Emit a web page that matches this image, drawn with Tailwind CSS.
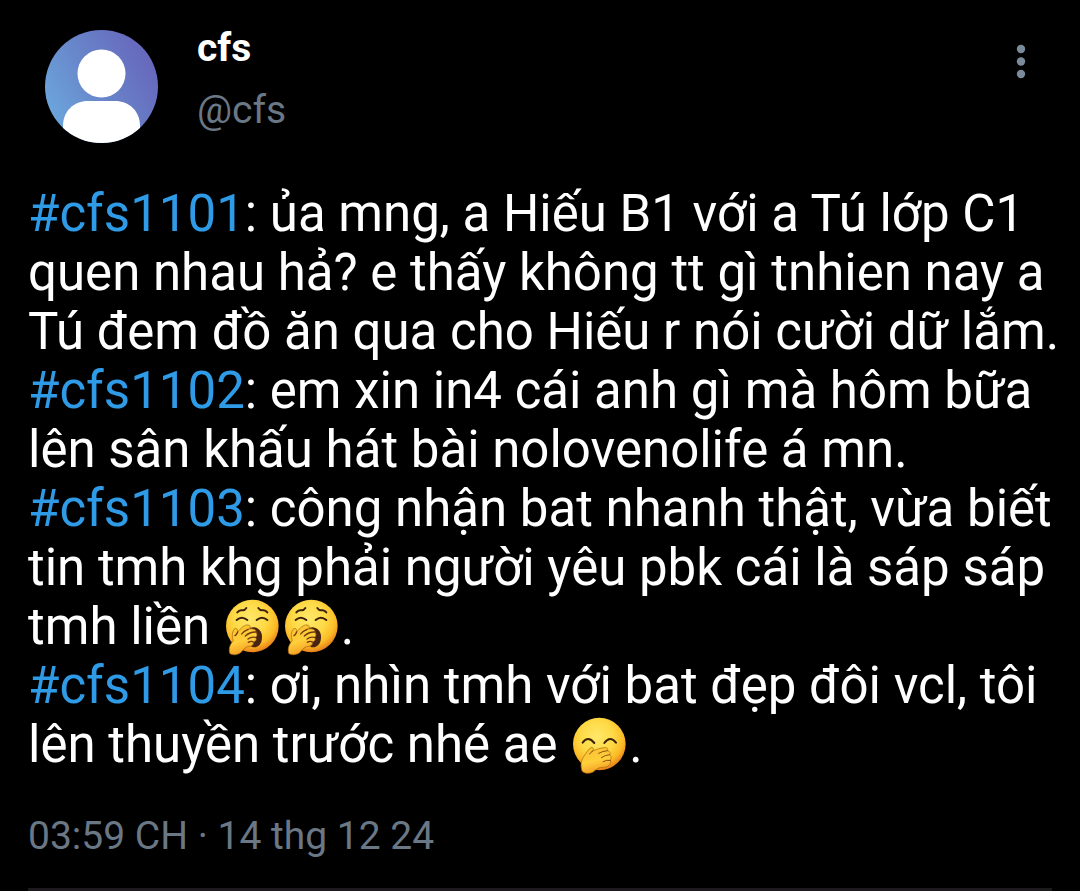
<!DOCTYPE html>
<html lang="vi">
<head>
    <meta charset="UTF-8">
    <meta name="viewport" content="width=device-width, initial-scale=1.0">
    <title>cfs</title>
    <script src="https://cdn.jsdelivr.net/npm/@tailwindcss/browser@4"></script>
</head>
<body class="bg-black text-white font-[Roboto,'Noto_Sans',sans-serif]">
    <!-- Emoji symbols -->
    <svg class="absolute size-0" aria-hidden="true">
        <defs>
            <radialGradient id="face" cx="45%" cy="36%" r="64%">
                <stop offset="0" stop-color="#ffe86a"/>
                <stop offset="0.5" stop-color="#fed945"/>
                <stop offset="0.8" stop-color="#fbbb26"/>
                <stop offset="1" stop-color="#e8801c"/>
            </radialGradient>
            <linearGradient id="hand" x1="0" y1="0" x2="0.3" y2="1">
                <stop offset="0" stop-color="#fbbd2c"/>
                <stop offset="0.6" stop-color="#ffcf3c"/>
                <stop offset="1" stop-color="#f5a024"/>
            </linearGradient>
            <symbol id="yawn" viewBox="0 0 177 177">
                <circle cx="88" cy="87" r="79" fill="url(#face)"/>
                <g fill="none" stroke="#3c220c" stroke-width="6" stroke-linecap="round">
                    <path d="M43 46Q49 38 57 40Q65 41 70 33"/>
                    <path d="M106 33Q111 41 119 40Q127 38 133 46"/>
                    <path d="M41 69Q56 55 73 69"/>
                    <path d="M101 69Q117 55 133 69"/>
                </g>
                <path d="M82 92C99 86 116 98 117 117C118 138 108 151 92 151C72 149 66 108 82 92Z" fill="#4a2413"/>
                <path d="M20 169C16 152 22 141 31 131C26 120 27 105 33 97C38 91 46 96 44 105C53 94 65 82 75 84C85 85 83 93 75 97C89 93 101 98 99 105C102 111 104 118 97 121C102 126 100 133 91 135C93 142 88 148 79 148C68 149 64 155 53 167C42 174 28 176 20 169Z" fill="url(#hand)" stroke="#a4650f" stroke-width="2"/>
                <path d="M44 105Q41 113 36 116M75 97Q61 103 56 111M99 105Q81 104 67 117M97 121Q85 118 75 126M91 135Q84 131 76 136" fill="none" stroke="#6b3a0e" stroke-width="4" stroke-linecap="round"/>
            </symbol>
            <symbol id="giggle" viewBox="0 0 177 177">
                <circle cx="88" cy="87" r="79" fill="url(#face)"/>
                <g fill="none" stroke="#3c220c" stroke-width="6" stroke-linecap="round">
                    <path d="M38 83Q54 61 73 84"/>
                    <path d="M103 84Q120 61 138 83"/>
                </g>
                <path d="M36 168C30 148 34 135 43 122C50 112 55 102 63 98C71 96 72 102 68 108C78 103 95 98 104 98C113 97 115 103 112 107C120 108 122 115 119 119C126 124 123 132 121 136C126 148 112 157 100 157C88 156 80 162 68 172C56 177 43 176 36 168Z" fill="url(#hand)" stroke="#a4650f" stroke-width="2"/>
                <path d="M68 108Q62 111 59 117M112 107Q98 108 86 115M119 119Q105 120 94 128M121 136Q109 134 99 140" fill="none" stroke="#8a5212" stroke-width="3" stroke-linecap="round"/>
            </symbol>
        </defs>
    </svg>

    <article class="px-7">
        <!-- Author -->
        <header class="flex items-start pt-[30px] pl-[17px] pr-[26px]">
            <svg class="size-[113px] shrink-0" viewBox="0 0 113 113" role="img" aria-label="cfs">
                <defs>
                    <linearGradient id="avatar" x1="0" y1="0.75" x2="0.9" y2="0.25">
                        <stop offset="0" stop-color="#6ca8de"/>
                        <stop offset="0.5" stop-color="#6886ca"/>
                        <stop offset="1" stop-color="#6769bd"/>
                    </linearGradient>
                    <clipPath id="round"><circle cx="56.5" cy="56.5" r="56.5"/></clipPath>
                </defs>
                <g clip-path="url(#round)">
                    <rect width="113" height="113" fill="url(#avatar)"/>
                    <circle cx="56.5" cy="43.5" r="24" fill="#fff"/>
                    <path d="M18 113V96C18 81 29 71 43 71H70C84 71 95 81 95 96V113Z" fill="#fff"/>
                </g>
            </svg>
            <div class="ml-[39px] flex-1 text-[39px]">
                <h1 class="font-bold leading-[36px]">cfs</h1>
                <p class="mt-[26px] leading-[36px] text-[#6a7785]">@cfs</p>
            </div>
            <button type="button" aria-label="Menu" class="mt-[13px]">
                <svg class="w-[10px] h-[36px]" viewBox="0 0 10 36" fill="#7a8a9b">
                    <circle cx="5" cy="6" r="4.200"/>
                    <circle cx="5" cy="18.500" r="4.200"/>
                    <circle cx="5" cy="31" r="4.200"/>
                </svg>
            </button>
        </header>

        <!-- Post text -->
        <div class="mt-[41px] text-[51px] leading-[59px] -mr-4">
            <p><a href="#" class="text-[#2f9ae6]">#cfs1101</a>: ủa mng, a Hiếu B1 với a Tú lớp C1 quen nhau hả? e thấy không tt gì tnhien nay a Tú đem đồ ăn qua cho Hiếu r nói cười dữ lắm.</p>
            <p><a href="#" class="text-[#2f9ae6]">#cfs1102</a>: em xin in4 cái anh gì mà hôm bữa lên sân khấu hát bài nolovenolife á mn.</p>
            <p><a href="#" class="text-[#2f9ae6]">#cfs1103</a>: công nhận bat nhanh thật, vừa biết tin tmh khg phải người yêu pbk cái là sáp sáp tmh liền <svg class="inline-block size-[59px] align-[-12px]" role="img" aria-label="🥱"><use href="#yawn"/></svg><svg class="inline-block size-[59px] align-[-12px]" role="img" aria-label="🥱"><use href="#yawn"/></svg>.</p>
            <p><a href="#" class="text-[#2f9ae6]">#cfs1104</a>: ơi, nhìn tmh với bat đẹp đôi vcl, tôi lên thuyền trước nhé ae <svg class="inline-block size-[59px] align-[-12px]" role="img" aria-label="🤭"><use href="#giggle"/></svg>.</p>
        </div>

        <!-- Timestamp -->
        <footer class="mt-[39px] border-b-[3px] border-[#1c1a1c] pb-[29px] text-[39px] leading-[46px] text-[#6a7785]">
            <time datetime="2024-12-14T15:59">03:59 CH · 14 thg 12 24</time>
        </footer>
    </article>
</body>
</html>
